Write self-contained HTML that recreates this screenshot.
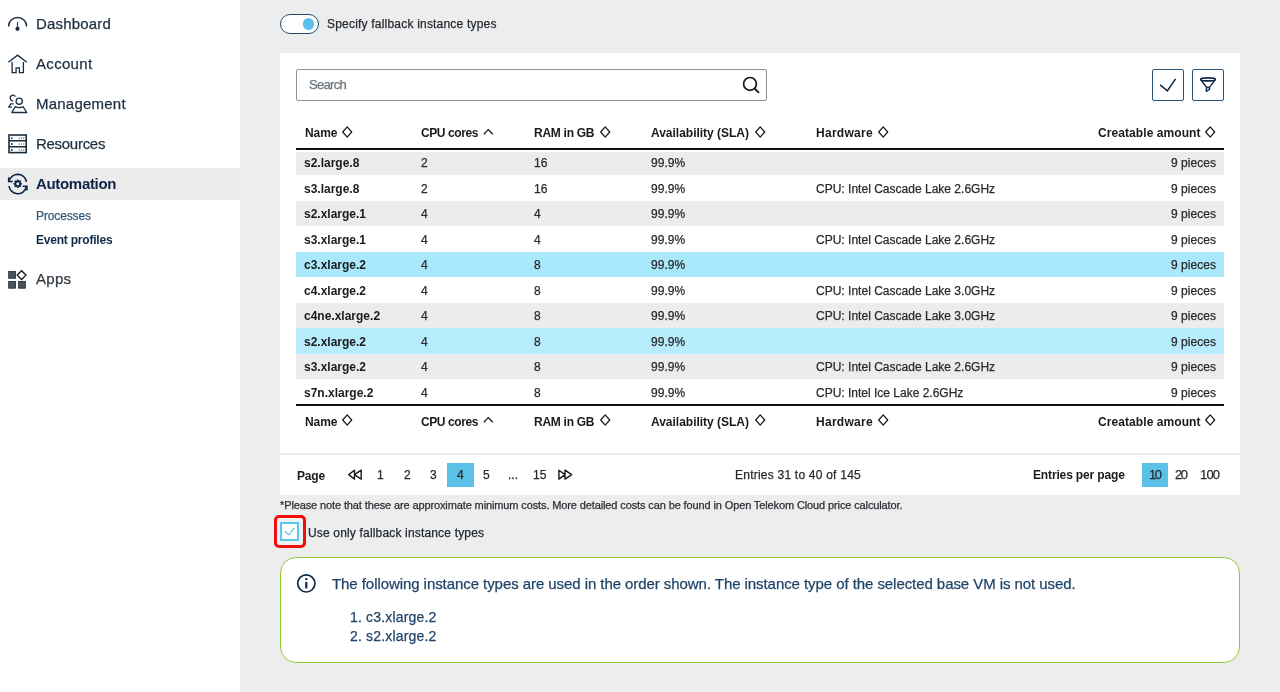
<!DOCTYPE html>
<html><head><meta charset="utf-8"><style>
*{box-sizing:border-box;margin:0;padding:0}
html,body{width:1280px;height:692px;overflow:hidden;background:#ededed;font-family:"Liberation Sans",sans-serif}
.t{position:absolute;white-space:nowrap;will-change:transform;-webkit-text-stroke:0.25px currentColor}
.abs{position:absolute}
svg{position:absolute;overflow:visible}
</style></head><body>
<div class="abs" style="left:0;top:0;width:240px;height:692px;background:#fff"></div>
<div class="abs" style="left:0;top:168px;width:240px;height:32px;background:#ececec"></div>
<div class="t" id="n_dash" style="left:36.00px;top:16.20px;font-size:15px;line-height:15px;letter-spacing:0.188px;color:#1f2e3d;">Dashboard</div>
<div class="t" id="n_acc" style="left:36.00px;top:56.30px;font-size:15px;line-height:15px;letter-spacing:0.317px;color:#1f2e3d;">Account</div>
<div class="t" id="n_man" style="left:36.00px;top:96.10px;font-size:15px;line-height:15px;letter-spacing:0.228px;color:#1f2e3d;">Management</div>
<div class="t" id="n_res" style="left:36.00px;top:136.30px;font-size:15px;line-height:15px;letter-spacing:-0.287px;color:#1f2e3d;">Resources</div>
<div class="t" id="n_auto" style="left:36.00px;top:176.10px;font-size:15px;line-height:15px;letter-spacing:-0.322px;-webkit-text-stroke:0;color:#0c2442;font-weight:bold">Automation</div>
<div class="t" id="n_proc" style="left:36.00px;top:209.74px;font-size:12px;line-height:12px;letter-spacing:-0.125px;color:#365a7a">Processes</div>
<div class="t" id="n_ev" style="left:36.00px;top:233.94px;font-size:12px;line-height:12px;letter-spacing:-0.212px;-webkit-text-stroke:0;color:#0f2a48;font-weight:bold">Event profiles</div>
<div class="t" id="n_apps" style="left:36.00px;top:271.10px;font-size:15px;line-height:15px;letter-spacing:0.267px;color:#333a44">Apps</div>
<svg style="left:0;top:0" width="40" height="40"><path d="M8.6 26.4 A9 9 0 0 1 26.6 26.4" fill="none" stroke="#1a2d40" stroke-width="1.5"/><path d="M17.1 28 L17.5 21.8 L17.9 28 Z" fill="#1a2d40" stroke="#1a2d40" stroke-width="0.6"/><circle cx="17.5" cy="28.8" r="2.1" fill="#1a2d40"/></svg>
<svg style="left:0;top:0" width="40" height="80"><path d="M8.4 62.3 L17.56 55.2 L26.7 62.3" fill="none" stroke="#1a2d40" stroke-width="1.35"/><path d="M12.1 62.1 V72.6 H16.1 V67.9 H19.4 V72.6 H23.4 V62.1" fill="none" stroke="#1a2d40" stroke-width="1.3"/></svg>
<svg style="left:0;top:0" width="40" height="120"><circle cx="19.2" cy="101.3" r="3.1" fill="none" stroke="#1a2d40" stroke-width="1.3"/><path d="M11.8 112.5 L15.3 106.7 Q19.2 108.6 23 106.7 L26.8 112.5 Z" fill="none" stroke="#1a2d40" stroke-width="1.3" stroke-linejoin="round"/><path d="M15.4 96.5 A2.8 2.8 0 1 0 13.2 100.8" fill="none" stroke="#1a2d40" stroke-width="1.3"/><path d="M13.6 103.9 H10.8 L8.7 107.2 H12" fill="none" stroke="#1a2d40" stroke-width="1.3" stroke-linejoin="round"/></svg>
<svg style="left:0;top:0" width="40" height="160"><rect x="9" y="135" width="17.2" height="17.6" fill="none" stroke="#1a2d40" stroke-width="1.6"/><path d="M9 140.8 H26.2 M9 146.7 H26.2" stroke="#1a2d40" stroke-width="1.5"/><circle cx="11.8" cy="138.1" r="0.95" fill="#1a2d40"/><circle cx="19.2" cy="138.1" r="0.6" fill="#1a2d40"/><circle cx="21.4" cy="138.1" r="0.6" fill="#1a2d40"/><circle cx="23.7" cy="138.1" r="0.6" fill="#1a2d40"/><circle cx="11.8" cy="144" r="0.95" fill="#1a2d40"/><circle cx="19.2" cy="144" r="0.6" fill="#1a2d40"/><circle cx="21.4" cy="144" r="0.6" fill="#1a2d40"/><circle cx="23.7" cy="144" r="0.6" fill="#1a2d40"/><circle cx="11.8" cy="150" r="0.95" fill="#1a2d40"/><circle cx="19.2" cy="150" r="0.6" fill="#1a2d40"/><circle cx="21.4" cy="150" r="0.6" fill="#1a2d40"/><circle cx="23.7" cy="150" r="0.6" fill="#1a2d40"/></svg>
<svg style="left:0;top:0" width="40" height="200"><path d="M9.3 180.6 A8.8 8.8 0 0 1 26.4 181.8" fill="none" stroke="#0c2442" stroke-width="1.6"/><path d="M8.7 177.3 V181.5 H12.8" fill="none" stroke="#0c2442" stroke-width="1.6"/><path d="M26.3 187 A8.8 8.8 0 0 1 9.0 186.0" fill="none" stroke="#0c2442" stroke-width="1.6"/><path d="M22.6 186.2 H26.9 V190.6" fill="none" stroke="#0c2442" stroke-width="1.6"/><polygon points="22.00,183.80 20.48,184.91 20.77,186.77 18.91,186.48 17.80,188.00 16.69,186.48 14.83,186.77 15.12,184.91 13.60,183.80 15.12,182.69 14.83,180.83 16.69,181.12 17.80,179.60 18.91,181.12 20.77,180.83 20.48,182.69" fill="#0c2442" stroke="#0c2442" stroke-width="0.8" stroke-linejoin="round"/><circle cx="17.8" cy="183.8" r="1.5" fill="#ececec"/></svg>
<svg style="left:0;top:0" width="40" height="300"><rect x="8.7" y="271.5" width="6.8" height="6.8" fill="#4b525b" stroke="#1f2630" stroke-width="0.8"/><rect x="8.7" y="281.4" width="6.8" height="6.8" fill="#4b525b" stroke="#1f2630" stroke-width="0.8"/><rect x="18.6" y="281.4" width="6.8" height="6.8" fill="#4b525b" stroke="#1f2630" stroke-width="0.8"/><path d="M21.6 270.7 L26 275.1 L21.6 279.5 L17.2 275.1 Z" fill="none" stroke="#111" stroke-width="1.3"/></svg>
<div class="abs" style="left:280px;top:14.2px;width:39px;height:20px;border:1.7px solid #1d4a70;border-radius:10px;background:#fff"></div>
<div class="abs" style="left:302.9px;top:18.4px;width:11.6px;height:11.6px;border-radius:50%;background:#5bc1e8"></div>
<div class="t" id="m_spec" style="left:326.70px;top:18.34px;font-size:12px;line-height:12px;letter-spacing:0.202px;color:#222a33">Specify fallback instance types</div>
<div class="abs" style="left:280px;top:53px;width:960px;height:400px;background:#fff"></div>
<div class="abs" style="left:280px;top:455px;width:960px;height:40px;background:#fff"></div>
<div class="abs" style="left:296px;top:69px;width:471px;height:32px;border:1px solid #8e9398;border-radius:2px;background:#fff"></div>
<div class="t" id="m_search" style="left:309.00px;top:78.40px;font-size:13px;line-height:13px;letter-spacing:-0.700px;color:#6b737b">Search</div>
<svg style="left:0;top:0" width="800" height="120"><circle cx="750" cy="83.9" r="6.4" fill="none" stroke="#16191d" stroke-width="1.7"/><path d="M754.6 88.5 L759 92.8" stroke="#16191d" stroke-width="1.8"/></svg>
<div class="abs" style="left:1152px;top:69px;width:32px;height:32px;border:1.5px solid #2a5579;border-radius:2px;background:#fff"></div>
<div class="abs" style="left:1192px;top:69px;width:32px;height:32px;border:1.5px solid #2a5579;border-radius:2px;background:#fff"></div>
<svg style="left:0;top:0" width="1280" height="120"><path d="M1160.1 84.9 L1167.4 90.8 L1175.6 78.9" fill="none" stroke="#0f2a46" stroke-width="1.5"/><ellipse cx="1208" cy="79.4" rx="7.4" ry="1.5" fill="none" stroke="#0f2a46" stroke-width="1.6"/><path d="M1200.6 79.6 L1206.5 87.2 L1206.3 91.4 L1209.5 89.5 L1209.6 87.2 L1215.4 79.6 M1206.5 87.2 Q1208 87.9 1209.6 87.2" fill="none" stroke="#0f2a46" stroke-width="1.4" stroke-linejoin="round"/></svg>
<div class="t" id="h_name" style="left:304.50px;top:127.14px;font-size:12px;line-height:12px;letter-spacing:-0.067px;-webkit-text-stroke:0;color:#1a1a1a;font-weight:bold">Name</div>
<div class="t" id="h_cpu" style="left:420.60px;top:127.14px;font-size:12px;line-height:12px;letter-spacing:-0.413px;-webkit-text-stroke:0;color:#1a1a1a;font-weight:bold">CPU cores</div>
<div class="t" id="h_ram" style="left:534.30px;top:127.14px;font-size:12px;line-height:12px;letter-spacing:-0.269px;-webkit-text-stroke:0;color:#1a1a1a;font-weight:bold">RAM in GB</div>
<div class="t" id="h_av" style="left:651.20px;top:127.14px;font-size:12px;line-height:12px;letter-spacing:-0.015px;-webkit-text-stroke:0;color:#1a1a1a;font-weight:bold">Availability (SLA)</div>
<div class="t" id="h_hw" style="left:816.00px;top:127.14px;font-size:12px;line-height:12px;letter-spacing:0.286px;-webkit-text-stroke:0;color:#1a1a1a;font-weight:bold">Hardware</div>
<div class="t" id="h_cr" style="right:79.31px;top:127.14px;font-size:12px;line-height:12px;letter-spacing:0.077px;-webkit-text-stroke:0;color:#1a1a1a;font-weight:bold">Creatable amount</div>
<svg style="left:342px;top:125.80000000000001px" width="11" height="12"><path d="M5.2 0.9 L9.7 6 L5.2 11.1 L0.7 6 Z" fill="none" stroke="#1a1a1a" stroke-width="1.25" stroke-linejoin="round"/></svg>
<svg style="left:599.6px;top:125.80000000000001px" width="11" height="12"><path d="M5.2 0.9 L9.7 6 L5.2 11.1 L0.7 6 Z" fill="none" stroke="#1a1a1a" stroke-width="1.25" stroke-linejoin="round"/></svg>
<svg style="left:754.6px;top:125.80000000000001px" width="11" height="12"><path d="M5.2 0.9 L9.7 6 L5.2 11.1 L0.7 6 Z" fill="none" stroke="#1a1a1a" stroke-width="1.25" stroke-linejoin="round"/></svg>
<svg style="left:877.8px;top:125.80000000000001px" width="11" height="12"><path d="M5.2 0.9 L9.7 6 L5.2 11.1 L0.7 6 Z" fill="none" stroke="#1a1a1a" stroke-width="1.25" stroke-linejoin="round"/></svg>
<svg style="left:1205px;top:125.80000000000001px" width="11" height="12"><path d="M5.2 0.9 L9.7 6 L5.2 11.1 L0.7 6 Z" fill="none" stroke="#1a1a1a" stroke-width="1.25" stroke-linejoin="round"/></svg>
<svg style="left:482.9px;top:125.80000000000001px" width="12" height="12"><path d="M0.8 8.3 L5.3 3.6 L9.8 8.3" fill="none" stroke="#1a1a1a" stroke-width="1.3"/></svg>
<div class="abs" style="left:296px;top:148px;width:928px;height:2px;background:#111"></div>
<div class="abs" style="left:296px;top:404px;width:928px;height:2px;background:#111"></div>
<div class="t" id="f_name" style="left:304.50px;top:415.64px;font-size:12px;line-height:12px;letter-spacing:-0.067px;-webkit-text-stroke:0;color:#1a1a1a;font-weight:bold">Name</div>
<div class="t" id="f_cpu" style="left:420.60px;top:415.64px;font-size:12px;line-height:12px;letter-spacing:-0.413px;-webkit-text-stroke:0;color:#1a1a1a;font-weight:bold">CPU cores</div>
<div class="t" id="f_ram" style="left:534.30px;top:415.64px;font-size:12px;line-height:12px;letter-spacing:-0.269px;-webkit-text-stroke:0;color:#1a1a1a;font-weight:bold">RAM in GB</div>
<div class="t" id="f_av" style="left:651.20px;top:415.64px;font-size:12px;line-height:12px;letter-spacing:-0.015px;-webkit-text-stroke:0;color:#1a1a1a;font-weight:bold">Availability (SLA)</div>
<div class="t" id="f_hw" style="left:816.00px;top:415.64px;font-size:12px;line-height:12px;letter-spacing:0.286px;-webkit-text-stroke:0;color:#1a1a1a;font-weight:bold">Hardware</div>
<div class="t" id="f_cr" style="right:79.31px;top:415.64px;font-size:12px;line-height:12px;letter-spacing:0.077px;-webkit-text-stroke:0;color:#1a1a1a;font-weight:bold">Creatable amount</div>
<svg style="left:342px;top:414.3px" width="11" height="12"><path d="M5.2 0.9 L9.7 6 L5.2 11.1 L0.7 6 Z" fill="none" stroke="#1a1a1a" stroke-width="1.25" stroke-linejoin="round"/></svg>
<svg style="left:599.6px;top:414.3px" width="11" height="12"><path d="M5.2 0.9 L9.7 6 L5.2 11.1 L0.7 6 Z" fill="none" stroke="#1a1a1a" stroke-width="1.25" stroke-linejoin="round"/></svg>
<svg style="left:754.6px;top:414.3px" width="11" height="12"><path d="M5.2 0.9 L9.7 6 L5.2 11.1 L0.7 6 Z" fill="none" stroke="#1a1a1a" stroke-width="1.25" stroke-linejoin="round"/></svg>
<svg style="left:877.8px;top:414.3px" width="11" height="12"><path d="M5.2 0.9 L9.7 6 L5.2 11.1 L0.7 6 Z" fill="none" stroke="#1a1a1a" stroke-width="1.25" stroke-linejoin="round"/></svg>
<svg style="left:1205px;top:414.3px" width="11" height="12"><path d="M5.2 0.9 L9.7 6 L5.2 11.1 L0.7 6 Z" fill="none" stroke="#1a1a1a" stroke-width="1.25" stroke-linejoin="round"/></svg>
<svg style="left:482.9px;top:414.3px" width="12" height="12"><path d="M0.8 8.3 L5.3 3.6 L9.8 8.3" fill="none" stroke="#1a1a1a" stroke-width="1.3"/></svg>
<div class="abs" style="left:296px;top:152px;width:928px;height:23px;background:#ececec"></div>
<div class="t" id="r0n" style="left:304.30px;top:157.34px;font-size:12px;line-height:12px;-webkit-text-stroke:0;color:#1a1a1a;font-weight:bold">s2.large.8</div>
<div class="t" id="r0c" style="left:420.60px;top:157.34px;font-size:12px;line-height:12px;color:#2a2a2a">2</div>
<div class="t" id="r0r" style="left:534.30px;top:157.34px;font-size:12px;line-height:12px;color:#2a2a2a">16</div>
<div class="t" id="r0a" style="left:651.00px;top:157.34px;font-size:12px;line-height:12px;letter-spacing:0.062px;color:#2a2a2a">99.9%</div>
<div class="t" id="r0p" style="right:64.36px;top:157.34px;font-size:12px;line-height:12px;letter-spacing:0.043px;color:#2a2a2a">9 pieces</div>
<div class="t" id="r1n" style="left:304.30px;top:182.84px;font-size:12px;line-height:12px;-webkit-text-stroke:0;color:#1a1a1a;font-weight:bold">s3.large.8</div>
<div class="t" id="r1c" style="left:420.60px;top:182.84px;font-size:12px;line-height:12px;color:#2a2a2a">2</div>
<div class="t" id="r1r" style="left:534.30px;top:182.84px;font-size:12px;line-height:12px;color:#2a2a2a">16</div>
<div class="t" id="r1a" style="left:651.00px;top:182.84px;font-size:12px;line-height:12px;letter-spacing:0.062px;color:#2a2a2a">99.9%</div>
<div class="t" id="r1h" style="left:815.60px;top:182.84px;font-size:12px;line-height:12px;letter-spacing:0.012px;color:#2a2a2a">CPU: Intel Cascade Lake 2.6GHz</div>
<div class="t" id="r1p" style="right:64.36px;top:182.84px;font-size:12px;line-height:12px;letter-spacing:0.043px;color:#2a2a2a">9 pieces</div>
<div class="abs" style="left:296px;top:200.5px;width:928px;height:25.5px;background:#ececec"></div>
<div class="t" id="r2n" style="left:304.30px;top:208.34px;font-size:12px;line-height:12px;-webkit-text-stroke:0;color:#1a1a1a;font-weight:bold">s2.xlarge.1</div>
<div class="t" id="r2c" style="left:420.60px;top:208.34px;font-size:12px;line-height:12px;color:#2a2a2a">4</div>
<div class="t" id="r2r" style="left:534.30px;top:208.34px;font-size:12px;line-height:12px;color:#2a2a2a">4</div>
<div class="t" id="r2a" style="left:651.00px;top:208.34px;font-size:12px;line-height:12px;letter-spacing:0.062px;color:#2a2a2a">99.9%</div>
<div class="t" id="r2p" style="right:64.36px;top:208.34px;font-size:12px;line-height:12px;letter-spacing:0.043px;color:#2a2a2a">9 pieces</div>
<div class="t" id="r3n" style="left:304.30px;top:233.84px;font-size:12px;line-height:12px;-webkit-text-stroke:0;color:#1a1a1a;font-weight:bold">s3.xlarge.1</div>
<div class="t" id="r3c" style="left:420.60px;top:233.84px;font-size:12px;line-height:12px;color:#2a2a2a">4</div>
<div class="t" id="r3r" style="left:534.30px;top:233.84px;font-size:12px;line-height:12px;color:#2a2a2a">4</div>
<div class="t" id="r3a" style="left:651.00px;top:233.84px;font-size:12px;line-height:12px;letter-spacing:0.062px;color:#2a2a2a">99.9%</div>
<div class="t" id="r3h" style="left:815.60px;top:233.84px;font-size:12px;line-height:12px;letter-spacing:0.012px;color:#2a2a2a">CPU: Intel Cascade Lake 2.6GHz</div>
<div class="t" id="r3p" style="right:64.36px;top:233.84px;font-size:12px;line-height:12px;letter-spacing:0.043px;color:#2a2a2a">9 pieces</div>
<div class="abs" style="left:296px;top:251.5px;width:928px;height:25.5px;background:#a9e9fb"></div>
<div class="t" id="r4n" style="left:304.30px;top:259.34px;font-size:12px;line-height:12px;-webkit-text-stroke:0;color:#1a1a1a;font-weight:bold">c3.xlarge.2</div>
<div class="t" id="r4c" style="left:420.60px;top:259.34px;font-size:12px;line-height:12px;color:#2a2a2a">4</div>
<div class="t" id="r4r" style="left:534.30px;top:259.34px;font-size:12px;line-height:12px;color:#2a2a2a">8</div>
<div class="t" id="r4a" style="left:651.00px;top:259.34px;font-size:12px;line-height:12px;letter-spacing:0.062px;color:#2a2a2a">99.9%</div>
<div class="t" id="r4p" style="right:64.36px;top:259.34px;font-size:12px;line-height:12px;letter-spacing:0.043px;color:#2a2a2a">9 pieces</div>
<div class="t" id="r5n" style="left:304.30px;top:284.84px;font-size:12px;line-height:12px;-webkit-text-stroke:0;color:#1a1a1a;font-weight:bold">c4.xlarge.2</div>
<div class="t" id="r5c" style="left:420.60px;top:284.84px;font-size:12px;line-height:12px;color:#2a2a2a">4</div>
<div class="t" id="r5r" style="left:534.30px;top:284.84px;font-size:12px;line-height:12px;color:#2a2a2a">8</div>
<div class="t" id="r5a" style="left:651.00px;top:284.84px;font-size:12px;line-height:12px;letter-spacing:0.062px;color:#2a2a2a">99.9%</div>
<div class="t" id="r5h" style="left:815.60px;top:284.84px;font-size:12px;line-height:12px;letter-spacing:0.012px;color:#2a2a2a">CPU: Intel Cascade Lake 3.0GHz</div>
<div class="t" id="r5p" style="right:64.36px;top:284.84px;font-size:12px;line-height:12px;letter-spacing:0.043px;color:#2a2a2a">9 pieces</div>
<div class="abs" style="left:296px;top:302.5px;width:928px;height:25.5px;background:#ececec"></div>
<div class="t" id="r6n" style="left:304.30px;top:310.34px;font-size:12px;line-height:12px;-webkit-text-stroke:0;color:#1a1a1a;font-weight:bold">c4ne.xlarge.2</div>
<div class="t" id="r6c" style="left:420.60px;top:310.34px;font-size:12px;line-height:12px;color:#2a2a2a">4</div>
<div class="t" id="r6r" style="left:534.30px;top:310.34px;font-size:12px;line-height:12px;color:#2a2a2a">8</div>
<div class="t" id="r6a" style="left:651.00px;top:310.34px;font-size:12px;line-height:12px;letter-spacing:0.062px;color:#2a2a2a">99.9%</div>
<div class="t" id="r6h" style="left:815.60px;top:310.34px;font-size:12px;line-height:12px;letter-spacing:0.012px;color:#2a2a2a">CPU: Intel Cascade Lake 3.0GHz</div>
<div class="t" id="r6p" style="right:64.36px;top:310.34px;font-size:12px;line-height:12px;letter-spacing:0.043px;color:#2a2a2a">9 pieces</div>
<div class="abs" style="left:296px;top:328px;width:928px;height:25.5px;background:#b6ecfc"></div>
<div class="t" id="r7n" style="left:304.30px;top:335.84px;font-size:12px;line-height:12px;-webkit-text-stroke:0;color:#1a1a1a;font-weight:bold">s2.xlarge.2</div>
<div class="t" id="r7c" style="left:420.60px;top:335.84px;font-size:12px;line-height:12px;color:#2a2a2a">4</div>
<div class="t" id="r7r" style="left:534.30px;top:335.84px;font-size:12px;line-height:12px;color:#2a2a2a">8</div>
<div class="t" id="r7a" style="left:651.00px;top:335.84px;font-size:12px;line-height:12px;letter-spacing:0.062px;color:#2a2a2a">99.9%</div>
<div class="t" id="r7p" style="right:64.36px;top:335.84px;font-size:12px;line-height:12px;letter-spacing:0.043px;color:#2a2a2a">9 pieces</div>
<div class="abs" style="left:296px;top:353.5px;width:928px;height:25.5px;background:#ececec"></div>
<div class="t" id="r8n" style="left:304.30px;top:361.34px;font-size:12px;line-height:12px;-webkit-text-stroke:0;color:#1a1a1a;font-weight:bold">s3.xlarge.2</div>
<div class="t" id="r8c" style="left:420.60px;top:361.34px;font-size:12px;line-height:12px;color:#2a2a2a">4</div>
<div class="t" id="r8r" style="left:534.30px;top:361.34px;font-size:12px;line-height:12px;color:#2a2a2a">8</div>
<div class="t" id="r8a" style="left:651.00px;top:361.34px;font-size:12px;line-height:12px;letter-spacing:0.062px;color:#2a2a2a">99.9%</div>
<div class="t" id="r8h" style="left:815.60px;top:361.34px;font-size:12px;line-height:12px;letter-spacing:0.012px;color:#2a2a2a">CPU: Intel Cascade Lake 2.6GHz</div>
<div class="t" id="r8p" style="right:64.36px;top:361.34px;font-size:12px;line-height:12px;letter-spacing:0.043px;color:#2a2a2a">9 pieces</div>
<div class="t" id="r9n" style="left:304.30px;top:386.84px;font-size:12px;line-height:12px;-webkit-text-stroke:0;color:#1a1a1a;font-weight:bold">s7n.xlarge.2</div>
<div class="t" id="r9c" style="left:420.60px;top:386.84px;font-size:12px;line-height:12px;color:#2a2a2a">4</div>
<div class="t" id="r9r" style="left:534.30px;top:386.84px;font-size:12px;line-height:12px;color:#2a2a2a">8</div>
<div class="t" id="r9a" style="left:651.00px;top:386.84px;font-size:12px;line-height:12px;letter-spacing:0.062px;color:#2a2a2a">99.9%</div>
<div class="t" id="r9h" style="left:815.60px;top:386.84px;font-size:12px;line-height:12px;letter-spacing:-0.004px;color:#2a2a2a">CPU: Intel Ice Lake 2.6GHz</div>
<div class="t" id="r9p" style="right:64.36px;top:386.84px;font-size:12px;line-height:12px;letter-spacing:0.043px;color:#2a2a2a">9 pieces</div>
<div class="t" id="p_page" style="left:296.70px;top:469.54px;font-size:12px;line-height:12px;letter-spacing:-0.167px;-webkit-text-stroke:0;color:#1a1a1a;font-weight:bold">Page</div>
<svg style="left:0;top:0" width="600" height="500"><path d="M354.5 470.2 L348.7 474.6 L354.5 479.1 Z M361.2 470.2 L354.5 474.6 L361.2 479.1 Z" fill="none" stroke="#1a1a1a" stroke-width="1.4" stroke-linejoin="round"/><path d="M558.9 470.2 L565 474.6 L558.9 479.1 Z M565 470.2 L571.7 474.6 L565 479.1 Z" fill="none" stroke="#1a1a1a" stroke-width="1.4" stroke-linejoin="round"/></svg>
<div class="abs" style="left:447px;top:463px;width:26.5px;height:24px;background:#5bc1e7"></div>
<div class="t" style="left:377.28px;top:468.94px;font-size:12px;line-height:12px;color:#2a2a2a">1</div>
<div class="t" style="left:404.07px;top:468.94px;font-size:12px;line-height:12px;color:#2a2a2a">2</div>
<div class="t" style="left:430.43px;top:468.94px;font-size:12px;line-height:12px;color:#2a2a2a">3</div>
<div class="t" style="left:456.78px;top:468.94px;font-size:12px;line-height:12px;color:#2a2a2a">4</div>
<div class="t" style="left:483.18px;top:468.94px;font-size:12px;line-height:12px;color:#2a2a2a">5</div>
<div class="t" style="left:507.90px;top:468.94px;font-size:12px;line-height:12px;color:#2a2a2a">...</div>
<div class="t" style="left:532.53px;top:468.94px;font-size:12px;line-height:12px;color:#2a2a2a">15</div>
<div class="t" id="p_entries" style="left:734.80px;top:469.04px;font-size:12px;line-height:12px;letter-spacing:0.225px;color:#2a2a2a">Entries 31 to 40 of 145</div>
<div class="t" id="p_epp" style="left:1032.90px;top:469.04px;font-size:12px;line-height:12px;letter-spacing:-0.143px;-webkit-text-stroke:0;color:#1a1a1a;font-weight:bold">Entries per page</div>
<div class="abs" style="left:1141.7px;top:463px;width:26px;height:23.6px;background:#5bc1e7"></div>
<div class="t" id="p_10" style="left:1148.90px;top:467.90px;font-size:13px;line-height:13px;letter-spacing:-1.550px;color:#2a2a2a">10</div>
<div class="t" id="p_20" style="left:1174.70px;top:467.90px;font-size:13px;line-height:13px;letter-spacing:-1.550px;color:#2a2a2a">20</div>
<div class="t" id="p_100" style="left:1199.60px;top:467.90px;font-size:13px;line-height:13px;letter-spacing:-0.800px;color:#2a2a2a">100</div>
<div class="t" id="fn" style="left:280.40px;top:499.79px;font-size:11px;line-height:11px;letter-spacing:-0.119px;color:#2a2f35">*Please note that these are approximate minimum costs. More detailed costs can be found in Open Telekom Cloud price calculator.</div>
<div class="abs" style="left:273.5px;top:515.3px;width:32.5px;height:32.5px;border:3.2px solid #f20d0d;border-radius:5px;background:#f0f0f0"></div>
<div class="abs" style="left:280px;top:522px;width:19px;height:19px;border:2px solid #5ac7f0;background:#fff"></div>
<svg style="left:0;top:0" width="320" height="560"><path d="M284.9 531.5 L289.1 534.7 L294.3 527.6" fill="none" stroke="#4cc0ee" stroke-width="1.1"/></svg>
<div class="t" id="cb_lbl" style="left:307.70px;top:527.34px;font-size:12px;line-height:12px;letter-spacing:0.169px;color:#222a33">Use only fallback instance types</div>
<div class="abs" style="left:280px;top:557px;width:960px;height:106px;border:1.6px solid #96c73a;border-radius:16px;background:#fff"></div>
<svg style="left:0;top:0" width="340" height="620"><circle cx="306.3" cy="583.4" r="8.6" fill="none" stroke="#0d2847" stroke-width="1.7"/><circle cx="306.3" cy="579.1" r="1.2" fill="#0d2847"/><rect x="305.2" y="581.9" width="2.2" height="6.6" fill="#0d2847"/></svg>
<div class="t" id="info" style="left:332.30px;top:575.70px;font-size:15px;line-height:15px;letter-spacing:-0.066px;color:#1f4468">The following instance types are used in the order shown. The instance type of the selected base VM is not used.</div>
<div class="t" id="li1" style="left:349.50px;top:610.05px;font-size:14px;line-height:14px;letter-spacing:0.173px;color:#1f4468">1. c3.xlarge.2</div>
<div class="t" id="li2" style="left:349.50px;top:629.35px;font-size:14px;line-height:14px;letter-spacing:0.173px;color:#1f4468">2. s2.xlarge.2</div>
</body></html>
